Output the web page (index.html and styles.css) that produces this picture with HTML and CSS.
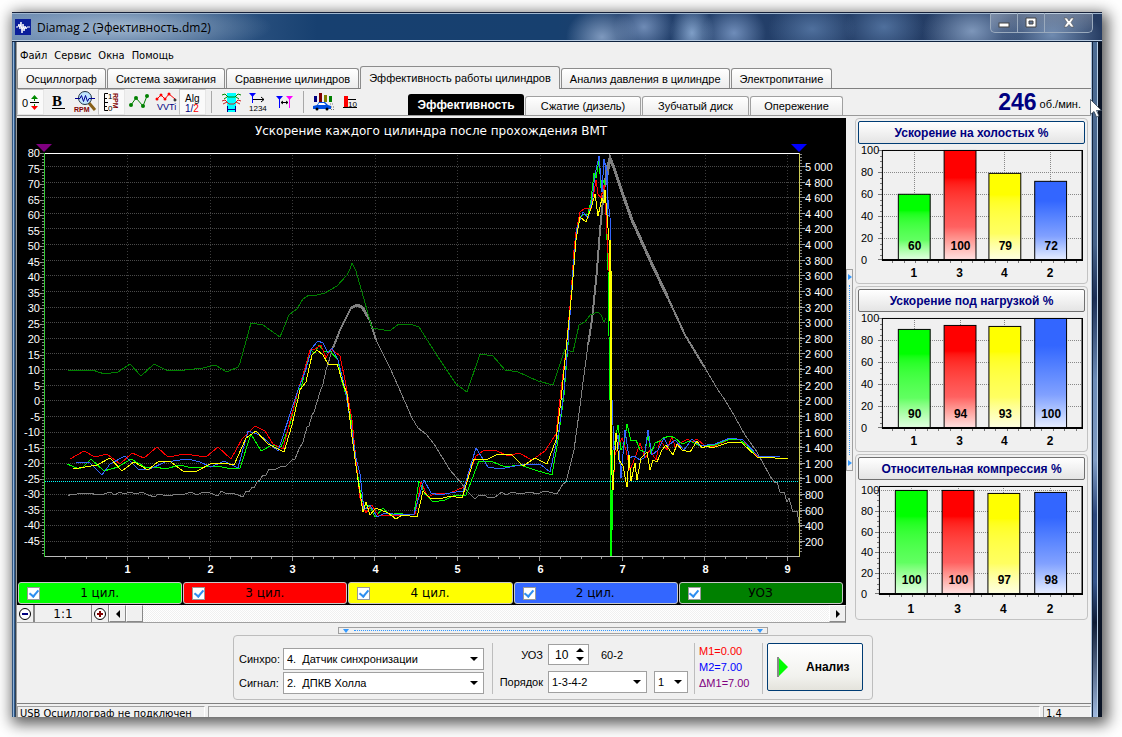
FILE: index.html
```html
<!DOCTYPE html>
<html lang="ru">
<head>
<meta charset="utf-8">
<title>Diamag 2 (Эфективность.dm2)</title>
<link rel="stylesheet" href="styles.css">
</head>
<body>
<div class="window">
  <header class="titlebar">
    <svg class="app-icon" width="16" height="16" viewBox="0 0 16 16"><rect width="16" height="16" fill="#0b1f9a"/><path d="M1 8h2l1-3 1 5 1-7 1 11 1-9 1 7 1-5 1 3 1-2h3" fill="none" stroke="#fff"/></svg>
    <span class="title">Diamag 2 (Эфективность.dm2)</span>
    <div class="controls">
      <button aria-label="Свернуть"><svg width="12" height="12"><rect x="1" y="6" width="10" height="4" fill="#fff" stroke="#444"/></svg></button>
      <button aria-label="Развернуть"><svg width="12" height="12"><path d="M1 1h10v9H1zM4 4v3h4V4z" fill="#fff" fill-rule="evenodd" stroke="#444"/></svg></button>
      <button class="close" aria-label="Закрыть"><svg width="12" height="12"><path d="M1 1h3l2 3 2-3h3L8 5.500l3 4.500H8L6 7.500 4 10H1l3-4.500z" fill="#fff" stroke="#555" stroke-width=".6"/></svg></button>
    </div>
  </header>
  <div class="frame">
    <div class="edge edge-left"></div>
    <main class="client">
      <nav class="menu"><a href="#">Файл</a><a href="#">Сервис</a><a href="#">Окна</a><a href="#">Помощь</a></nav>
      <nav class="tabs">
        <button>Осциллограф</button><button>Система зажигания</button><button>Сравнение цилиндров</button><button class="active">Эффективность работы цилиндров</button><button>Анализ давления в цилиндре</button><button>Электропитание</button>
      </nav>
      <div class="toolbar">
        <div class="tools">
          <button class="on" aria-label="Ноль"><svg viewBox="0 0 24 24"><text x="3" y="17" class="t11">0</text><path d="M11 12.500h9" stroke="#000"/><path d="M15.500 11V7M15.500 14v4" stroke="#080"/><path d="M12 9l3.500-4L19 9z" fill="#008a00"/><path d="M12 16l3.500 4 3.500-4z" fill="#f00"/></svg></button>
          <button aria-label="Жирный"><svg viewBox="0 0 24 24"><text x="6" y="16" class="serif">B</text><path d="M6 18.500h13" stroke="#000" stroke-width="1"/></svg></button>
          <button aria-label="Обороты"><svg viewBox="0 0 24 24"><path d="M16 13l6 7" stroke="#876018" stroke-width="3"/><circle cx="12" cy="8" r="6.500" fill="#bfe4ff" stroke="#234"/><path d="M2 8.500h5l1.500-3 2 6 2-6 2 6 1.500-3h6" fill="none" stroke="#000090"/><text x="1" y="22" class="rpm">RPM</text></svg></button>
          <button class="on" aria-label="Шкала оборотов"><svg viewBox="0 0 24 24"><path d="M8 3.500H4.500v17H8M5 8.500h2M5 12.500h3M5 16.500h2" fill="none" stroke="#000"/><text x="8" y="9" class="t8">1</text><text x="8" y="21" class="t8">0</text><text x="3" y="-13" transform="rotate(90)" class="rpm">RPM</text></svg></button>
          <button aria-label="Точки"><svg viewBox="0 0 24 24"><path d="M4 15l5-7 7 8 4-10" fill="none" stroke="#008000"/><g fill="#008000"><circle cx="4" cy="15" r="2"/><circle cx="9" cy="8" r="2"/><circle cx="16" cy="16" r="2"/><circle cx="20" cy="6" r="2"/></g></svg></button>
          <button aria-label="VVTi"><svg viewBox="0 0 24 24"><path d="M3 9l4-4 4 4 4-5 6 5" fill="none" stroke="#f00"/><g fill="#f00"><circle cx="3" cy="9" r="1.500"/><circle cx="7" cy="5" r="1.500"/><circle cx="11" cy="9" r="1.500"/><circle cx="15" cy="4" r="1.500"/></g><circle cx="21" cy="10" r="1" fill="none" stroke="#000"/><text x="3" y="20" class="vvt">VVTi</text></svg></button>
          <button class="on" aria-label="Алгоритм"><svg viewBox="0 0 24 24"><text x="4" y="12" class="t10">Alg</text><text x="4" y="22" class="t10" fill="#000080">1/<tspan fill="#f00">2</tspan></text></svg></button>
          <i class="sep"></i>
          <button aria-label="Интервал"><svg viewBox="0 0 24 24"><path d="M8 3h9v19H8z" fill="#0ff"/><path d="M3 5l3-1 3 3h7l3-3 3 1M5 9l3-2M20 9l-3-2" fill="none" stroke="#080"/><path d="M3 11l3-1 4 4h5l4-4 3 1M4 14l4-2M21 14l-4-2" fill="none" stroke="#c22"/><path d="M8.500 16v6M16.500 16v6M8 19.500h9" stroke="#000090"/></svg></button>
          <button aria-label="Порядок цилиндров"><svg viewBox="0 0 24 24"><path d="M3 3h7L6.500 7z" fill="#00f"/><path d="M6.500 6v7" stroke="#00f"/><path d="M7 9.500h11M15 7l3 2.500-3 2.500" fill="none" stroke="#000"/><text x="3" y="21" class="t8">1234</text></svg></button>
          <button aria-label="Маркеры"><svg viewBox="0 0 24 24"><path d="M3 6h7l-3.500 4z" fill="#00f"/><path d="M6.500 8v10" stroke="#00f"/><path d="M13 6h7l-3.500 4z" fill="#f0f"/><path d="M16.500 8v10" stroke="#f0f"/><path d="M8 12.500h7M10 11l-2 1.500 2 1.500M13 11l2 1.500-2 1.500" fill="none" stroke="#000"/></svg></button>
          <i class="sep"></i>
          <button aria-label="Автомобиль"><svg viewBox="0 0 24 24"><path d="M3 6h3v6H3z" fill="#000080"/><path d="M8 3h3v9H8z" fill="#800000"/><path d="M13 5h3v7h-3z" fill="#808000"/><path d="M18 6h3v6h-3z" fill="#008000"/><path d="M2 19v-3l4-1 2-3h6l3 3 3 1v3z" fill="#0050e0"/><path d="M8 13h5l2 2H7z" fill="#fff"/><circle cx="6" cy="19" r="1.500"/><circle cx="16" cy="19" r="1.500"/><path d="M19 14h4M20 17h3M20 19.500h3" stroke="#777" stroke-dasharray="1 1"/></svg></button>
          <button aria-label="Столбцы"><svg viewBox="0 0 24 24"><path d="M6 6h4v11H6z" fill="#f00"/><path d="M5 17.500h14M10 9.500h8" stroke="#000"/><text x="10" y="17" class="t8">10</text></svg></button>
        </div>
        <nav class="subtabs">
          <button class="active">Эффективность</button><button>Сжатие (дизель)</button><button>Зубчатый диск</button><button>Опережение</button>
        </nav>
        <p class="rpm-value"><b>246</b> об./мин.</p>
      </div>

      <div class="content">
        <section class="chart">
          <svg id="main" class="plot" viewBox="17 118 829 463" role="img" aria-label="Ускорение каждого цилиндра"></svg>
          <div class="legend">
            <label class="c1"><input type="checkbox" checked><span>1 цил.</span></label>
            <label class="c2"><input type="checkbox" checked><span>3 цил.</span></label>
            <label class="c3"><input type="checkbox" checked><span>4 цил.</span></label>
            <label class="c4"><input type="checkbox" checked><span>2 цил.</span></label>
            <label class="c5"><input type="checkbox" checked><span>УОЗ</span></label>
          </div>
          <div class="scroll">
            <button aria-label="Уменьшить"><svg width="14" height="14"><circle cx="7" cy="7" r="5.500" fill="#fff" stroke="#000"/><path d="M4 7h6" stroke="#000080" stroke-width="2"/></svg></button>
            <output>1:1</output>
            <button aria-label="Увеличить"><svg width="14" height="14"><circle cx="7" cy="7" r="5.500" fill="#fff" stroke="#000"/><path d="M4 7h6M7 4v6" stroke="#800000" stroke-width="2"/></svg></button>
            <button class="raised" aria-label="Влево"><svg width="8" height="8"><path d="M6 0v8L2 4z"/></svg></button>
            <button class="raised" aria-label="Ползунок"></button>
            <div class="track"></div>
            <button class="raised" aria-label="Вправо"><svg width="8" height="8"><path d="M2 0v8l4-4z"/></svg></button>
          </div>
        </section>
        <div class="vsplit"><i></i><b></b><i></i></div>
        <aside class="panels">
          <section><button class="focus">Ускорение на холостых %</button><svg id="idle" viewBox="0 0 228 137"></svg></section>
          <section><button>Ускорение под нагрузкой %</button><svg id="load" viewBox="0 0 228 137"></svg></section>
          <section><button>Относительная компрессия %</button><svg id="comp" viewBox="0 0 228 137"></svg></section>
        </aside>
      </div>

      <div class="hsplit"><i></i><b></b><i></i></div>
      <form class="settings">
        <div class="signals">
          <label for="sync">Синхро:</label><div class="combo"><select id="sync"><option>4.&nbsp; Датчик синхронизации</option></select></div>
          <label for="sig">Сигнал:</label><div class="combo"><select id="sig"><option>2.&nbsp; ДПКВ Холла</option></select></div>
        </div>
        <div class="order">
          <label for="uoz">УОЗ</label>
          <div class="line"><div class="spin"><input id="uoz" value="10"></div><span>60-2</span></div>
          <label for="ord">Порядок</label>
          <div class="line"><div class="combo wide"><select id="ord"><option>1-3-4-2</option></select></div><div class="combo narrow"><select aria-label="Первый цилиндр"><option>1</option></select></div></div>
        </div>
        <div class="markers"><span class="m1">M1=0.00</span><span class="m2">M2=7.00</span><span class="m3">ΔM1=7.00</span></div>
        <div class="run"><button type="button"><svg width="11" height="20"><path d="M1 0v20" stroke="#888" stroke-width="2"/><path d="M2 1v18l9-9z" fill="#0f0"/></svg>Анализ</button></div>
      </form>
      <footer class="status"><span class="usb">USB Осциллограф не подключен</span><span class="fill"></span><span class="ver">1.4</span></footer>
    </main>
    <div class="edge edge-right"></div>
  </div>
  <svg class="pointer" width="12" height="19" viewBox="0 0 12 19"><path d="M.5.5v15l3.500-3 2.500 5.500 2.500-1-2.500-5.500h5z" fill="#fff" stroke="#345" stroke-width=".8"/></svg>
</div>
<script src="charts.js"></script>
</body>
</html>
```
FILE: styles.css
```css
* { box-sizing: border-box; }
body { margin: 0; padding: 12px 20px 20px 12px; background: #fff; font: 12px "Liberation Sans", Arial, sans-serif; color: #000; }
button, input, select { font: inherit; color: inherit; margin: 0; border-radius: 0; }
button { padding: 0; border: 0; background: none; }
p { margin: 0; }
.window { position: relative; display: flex; flex-direction: column; height: calc(100vh - 32px); box-shadow: 3px 4px 14px 3px rgba(0,0,0,.65); background: #16305a; }

.titlebar { display: flex; align-items: center; height: 30px; padding-left: 3px; flex: none; border-top: 1px solid #16213a; border-bottom: 1px solid #10233f; box-shadow: inset 0 1px #9fb6cf, inset 0 -1px #b8cbe0;
  background:
    radial-gradient(ellipse 150px 28px at 110px 14px, rgba(190,208,226,.75), transparent),
    radial-gradient(ellipse 36px 30px at 590px 24px, rgba(150,175,210,.8), transparent),
    radial-gradient(ellipse 30px 26px at 632px 14px, rgba(130,158,200,.8), transparent),
    radial-gradient(ellipse 22px 30px at 680px 20px, rgba(150,182,222,.8), transparent),
    radial-gradient(ellipse 32px 28px at 722px 20px, rgba(130,160,205,.8), transparent),
    radial-gradient(ellipse 44px 28px at 800px 16px, rgba(90,124,170,.8), transparent),
    radial-gradient(ellipse 40px 28px at 872px 14px, rgba(90,124,170,.8), transparent),
    radial-gradient(ellipse 50px 34px at 960px 18px, rgba(135,160,195,.9), transparent),
    radial-gradient(ellipse 50px 28px at 1040px 22px, rgba(120,148,185,.9), transparent),
    linear-gradient(90deg, #6585ad, #2f5583 20%, #174070 28%, #17406f 50%, #22406c 56%, #263c62 100%); }
.app-icon { flex: none; margin-right: 6px; }
.title { font: 12px "Open Sans", "Noto Sans", sans-serif; flex: 1; }
.controls { display: flex; align-self: flex-start; margin-right: 9px; border: 1px solid #9aaabd; border-top: 0; border-radius: 0 0 5px 5px; }
.controls button { width: 27px; height: 19px; display: grid; place-items: center; background: linear-gradient(rgba(255,255,255,.3), rgba(255,255,255,.05)); border-right: 1px solid #9aaabd; }
.controls .close { width: 47px; border-right: 0; }

.frame { display: grid; grid-template-columns: 5px minmax(0,1fr) 11px; flex: 1; min-height: 0; }
.edge-left { background: linear-gradient(90deg, #33557e 0 1px, #8fb2d8 1px 2px, #2f5a8c 2px 3px, #33414f 3px 4px, #9a9a9a 4px); }
.edge-right { background: linear-gradient(90deg, #a9bfd8 0 1px, #12233c 1px 2px, transparent 2px 6px, #b9cfe6 6px 7px, #0a1426 7px), linear-gradient(#4c6c94, #45628a 30%, #1a2e55 38%, #6c8cb8 50%, #7f9cc4 62%, #2a467c 70%, #35558c 80%, #0d1b35 86%, #9fb9e0); }
.client { display: flex; flex-direction: column; background: #f0f0f0; overflow: hidden; min-width: 0; }
.client > * { flex: none; }

.menu { display: flex; gap: 7px; height: 24px; align-items: center; padding: 2px 3px 0; font: 11px "DejaVu Sans Condensed", "DejaVu Sans", sans-serif; }
.menu a { color: #000; text-decoration: none; }
.tabs { display: flex; gap: 1px; height: 23px; align-items: flex-end; border-bottom: 1px solid #808080; font-size: 11px; }
.tabs button, .subtabs button { height: 20px; padding: 0 8px; border: 1px solid #8c8c8c; border-radius: 3px 3px 0 0; border-bottom: 0; background: linear-gradient(#fff, #ececec); white-space: nowrap; }
.tabs .active { height: 23px; margin-bottom: -1px; background: #f0f0f0; }

.toolbar { display: flex; height: 27px; border-bottom: 1px solid #999; }
.tools { display: flex; width: 391px; align-items: stretch; }
.tools button { width: 27px; display: grid; place-items: center; }
.tools svg { width: 24px; height: 24px; }
.tools .on { background: #fafafa; border: 1px solid #c4c4c4; border-right-color: #e6e6e6; border-bottom-color: #e6e6e6; }
.sep { width: 1px; margin: 2px 5px; background: #a8a8a8; }
.t11 { font-size: 11px; } .t10 { font-size: 10px; } .t8 { font-size: 8px; }
.rpm { font-size: 7px; font-weight: 700; fill: #800000; }
.vvt { font-size: 9px; fill: #000080; }
.serif { font: bold 15px "Liberation Serif", serif; }
.subtabs { display: flex; gap: 1px; align-items: flex-end; font-size: 11px; }
.subtabs button { height: 19px; width: 116px; border-color: #a0a0a0; }
.subtabs button:nth-child(3) { width: 107px; }
.subtabs button:last-child { width: 93px; }
.subtabs .active { height: 21px; background: #000; color: #fff; font-weight: 700; border: 0; font-size: 12px; }
.rpm-value { margin-left: auto; padding-right: 10px; font-size: 11px; line-height: 27px; white-space: nowrap; }
.rpm-value b { font-size: 23px; color: #000080; vertical-align: -2px; }

.content { display: flex; align-items: flex-start; padding-top: 2px; }
.chart { flex: 1; min-width: 0; background: #000; border-bottom: 1px solid #a0a0a0; }
.plot { display: block; width: 100%; }
.plot text { fill: #fff; font-size: 11px; }
.plot .head { font: 12px "DejaVu Sans", sans-serif; }
.plot .ax { font-weight: 700; }
.trace { fill: none; shape-rendering: crispEdges; }
.legend { display: flex; gap: 1px; padding: 1px 3px 1px 1px; }
.legend label { flex: 1; display: flex; align-items: center; height: 22px; padding-left: 8px; border: 1px solid #c8c8c8; border-radius: 3px; font: 12px "DejaVu Sans", sans-serif; }
.legend span { flex: 1; text-align: center; padding-right: 22px; }
.legend input { appearance: none; width: 13px; height: 13px; border: 1px solid #999; background: #fff; display: grid; place-items: center; }
.legend input:checked::before { content: ""; width: 4px; height: 7px; margin-top: -2px; border: solid #2f8ff0; border-width: 0 2px 2px 0; transform: rotate(40deg); }
.c1 { background: #0f0; } .c2 { background: #f00; } .c3 { background: #ff0; } .c4 { background: #36f; } .c5 { background: #008000; }
.scroll { display: flex; height: 17px; background: #f0f0f0; }
.scroll button { width: 17px; display: grid; place-items: center; border-right: 1px solid #888; }
.scroll output { width: 58px; text-align: center; font: 12px/18px "DejaVu Sans", sans-serif; border-right: 1px solid #888; border-left: 1px solid #888; }
.scroll .raised { border: 1px solid #888; border-left-color: #fff; border-top-color: #fff; }
.track { flex: 1; background: repeating-conic-gradient(#fff 0 25%, #f0f0f0 0 50%) 0 0/2px 2px; }
.vsplit { width: 7px; height: 202px; margin-top: 151px; display: flex; flex-direction: column; align-items: center; justify-content: space-between; border: 1px solid #a0a0a0; padding: 4px 0; }
.vsplit b { flex: 1; margin: 5px 0; border-left: 1px dotted #39f; }
.vsplit i { border: solid transparent; border-width: 3px 0 3px 4px; border-left-color: #39f; }
.panels { width: 238px; padding: 0 3px 0 2px; display: grid; gap: 2px; }
.panels section { height: 166px; border: 1px solid #c2c2c2; border-radius: 4px; padding: 2px; }
.panels button { display: block; width: 100%; height: 23px; border: 1px solid #707070; border-radius: 2px; background: linear-gradient(#fff, #e4e4e4); color: #000080; font-weight: 700; }
.panels .focus { border-color: #003c74; }
.panels svg { display: block; width: 100%; }
.panels svg text { font-size: 11px; }
.panels svg .num { font-size: 12px; font-weight: 700; }

.hsplit { width: 430px; max-width: 100%; height: 7px; margin: 4px 0 0 321px; display: flex; align-items: center; justify-content: space-between; border: 1px solid #a0a0a0; padding: 0 4px; }
.hsplit b { flex: 1; margin: 0 5px; border-top: 1px dotted #39f; }
.hsplit i { border: solid transparent; border-width: 4px 3px 0; border-top-color: #39f; }
.settings { display: flex; width: 640px; height: 65px; margin: 1px 0 3px 216px; padding: 7px 9px 5px 5px; border: 1px solid #bdbdbd; border-radius: 4px; font-size: 11px; }
.signals { display: grid; grid-template-columns: 44px 201px; row-gap: 2px; align-items: center; padding: 5px 8px 0 0; border-right: 1px solid #bdbdbd; }
.combo { position: relative; height: 22px; }
.combo select { appearance: none; width: 100%; height: 100%; padding: 0 3px; border: 1px solid #a0a0a0; background: #fff; }
.combo::after { content: ""; position: absolute; right: 6px; top: 9px; border: solid transparent; border-width: 4px 4px 0; border-top-color: #000; }
.order { display: grid; grid-template-columns: 55px auto; row-gap: 3px; align-items: center; padding: 0 6px 0 0; border-right: 1px solid #bdbdbd; }
.order label { text-align: right; padding-right: 5px; }
.line { display: flex; align-items: center; gap: 7px; }
.line > span { padding-left: 5px; }
.wide { width: 99px; } .narrow { width: 34px; }
.spin { position: relative; width: 41px; height: 21px; }
.spin input { width: 100%; height: 100%; border: 1px solid #a0a0a0; padding: 0 6px; background: #fff; font-size: 12px; }
.spin::before, .spin::after { content: ""; position: absolute; right: 5px; border: solid transparent; }
.spin::before { top: 4px; border-width: 0 4px 4px; border-bottom-color: #000; }
.spin::after { bottom: 4px; border-width: 4px 4px 0; border-top-color: #000; }
.markers { display: flex; flex-direction: column; width: 69px; padding-left: 4px; line-height: 16px; border-right: 1px solid #bdbdbd; white-space: nowrap; }
.m1 { color: #f00; } .m2 { color: #00f; } .m3 { color: #800080; }
.run { padding-left: 4px; }
.run button { display: flex; align-items: center; gap: 18px; width: 96px; height: 48px; padding-left: 9px; border: 1px solid #003c74; border-radius: 2px; background: linear-gradient(#fff, #f2f2ee 70%, #e4e3dc); font-weight: 700; font-size: 12px; }
.status { display: flex; gap: 3px; border-top: 1px solid #808080; padding-top: 2px; font: 11px/14px "DejaVu Sans Condensed", "DejaVu Sans", sans-serif; }
.status span { border: 1px solid #a0a0a0; border-right-color: #fff; height: 18px; padding-left: 2px; white-space: nowrap; }
.usb { width: 188px; } .fill { flex: 1; } .ver { width: 48px; }
.pointer { position: absolute; right: 0; top: 87px; }
```
FILE: charts.js
```js
const NS = 'http://www.w3.org/2000/svg';
function add(root, tag, attrs, text) {
  const el = document.createElementNS(NS, tag);
  for (const k in attrs) el.setAttribute(k, attrs[k]);
  if (text !== undefined) el.textContent = text;
  root.appendChild(el);
  return el;
}
function line(root, x1, y1, x2, y2, stroke, dash) {
  const a = { x1, y1, x2, y2, stroke, 'shape-rendering': 'crispEdges' };
  if (dash) a['stroke-dasharray'] = dash;
  add(root, 'line', a);
}

const main = document.getElementById('main');
add(main, 'text', { x: 431, y: 135, 'text-anchor': 'middle', class: 'head' }, 'Ускорение каждого цилиндра после прохождения ВМТ');
for (let i = 0; i < 25; i++) {
  const y = Math.round(541 - i * 15.63) + 0.5;
  line(main, 46, y, 799, y, '#4a4a4a', '1 1');
  line(main, 800, y, 805, y, '#aaa');
  const v = (i + 1) * 200;
  const label = v < 1000 ? String(v) : Math.floor(v / 1000) + ' ' + String(v % 1000).padStart(3, '0');
  add(main, 'text', { x: 805, y: y + 4 }, label);
}
for (let i = 0; i < 26; i++) {
  const y = Math.round(153 + i * 15.52);
  line(main, 40, y + 0.5, 44, y + 0.5, '#999');
  add(main, 'text', { x: 40, y: y + 4, 'text-anchor': 'end' }, String(80 - i * 5));
}
for (let i = 0; i < 130; i++) {
  const y = Math.round(153 + i * 3.104) + 0.5;
  line(main, 42, y, 44, y, '#888');
  if (i < 129) line(main, 800, y + 1, 802, y + 1, '#888');
}
for (let i = 1; i < 10; i++) {
  const x = Math.round(44.5 + i * 82.5) + 0.5;
  line(main, x, 155, x, 556, '#3c3c3c', '1 2');
  add(main, 'text', { x, y: 573, 'text-anchor': 'middle', class: 'ax' }, String(i));
}
for (let i = 1; i < 37; i++) {
  const x = Math.round(44.5 + i * 20.62) + 0.5;
  line(main, x, 557, x, i % 4 ? 559 : 561, '#999');
}
line(main, 45, 481.5, 799, 481.5, '#0ff', '1 1');

const gray = '68,496 71,494 75,495 79,493 86,494 91,493 96,495 104,494 110,492 115,495 120,492 124,494 130,492 136,494 142,492 148,495 155,497 158,494 168,496 178,494 182,495 191,492 197,495 203,492 210,493 218,496 221,491 227,494 232,493 238,495 243,497 246,491 249,492 252,487 254,488 257,482 260,480 263,475 266,475 269,469 274,470 280,467 286,466 292,460 295,459 299,449 303,442 307,427 309,426 312,415 314,412 320,392 323,384 326,370 333,348 340,330 346,318 351,308 357,305 362,307 370,321 376,340 390,368 398,386 405,402 412,418 418,428 426,434 434,444 450,470 462,484 467,491 475,499 479,495 485,495 488,498 495,497 502,492 506,495 512,492 520,494 530,492 537,494 545,491 557,494 563,484 566,482 569,470 574,450 580,406 582,390 588,345 592,320 597,270 600,230 603,200 607,165 610,155 614,168 622,192 632,220 650,260 668,298 685,335 705,368 718,390 725,400 735,417 745,435 757,452 770,476 775,483 777,482 780,492 784,492 787,502 789,498 793,512 797,511 799,523';
const traces = [
  ['#808080', 1, gray],
  ['#808080', 2, '333,348 340,330 346,318 351,308 357,305 362,307 370,321 376,340'],
  ['#808080', 3, '351,308 357,305 362,307 368,317'],
  ['#808080', 3, '607,175 610,158 614,168 622,192 632,220 650,260 668,298'],
  ['#808080', 2, '588,345 592,320 597,270 600,230 603,200 607,165'],
  ['#808080', 2, '668,298 685,335 705,368'],
  ['#008000', 1, '68,370 93,370 98,372 105,374 118,372 130,364 141,376 154,364 166,370 185,370 203,368 215,365 227,372 238,367 240,363 251,323 263,325 280,337 289,315 297,309 303,299 309,295 317,295 325,293 337,286 347,275 350,269 352,263 356,271 367,310 372,328 384,330 391,330 399,324 410,324 419,327 438,357 456,384 467,392 480,354 493,356 505,370 518,372 538,381 553,385 565,349 573,352 579,325 585,322 590,315 598,312 601,315 604,322 606,318'],
  ['#00ff00', 1, '67,464 79,469 83,467 91,459 104,471 118,467 131,459 145,467 155,467 166,469 179,465 193,468 205,467 218,466 231,469 240,468 251,434 261,451 272,445 281,447 290,424 298,390 301,388 310,350 315,353 319,345 324,351 330,351 338,360 341,378 346,395 350,410 354,450 360,490 364,506 369,505 375,517 383,508 390,515 399,513 407,515 414,514 419,481 425,494 433,502 445,500 455,495 466,495 479,461 493,462 505,467 520,465 535,470 552,475 558,440 564,395 568,345 572,285 575,245 579,218 584,214 588,214 591,200 594,173 596,178 599,160 601,188 604,180 606,210 608,270 610,400 611,556'],
  ['#ff0000', 1, '70,459 84,451 95,457 107,454 120,464 132,453 144,458 157,447 168,457 185,454 206,457 218,447 231,459 242,439 255,426 265,431 273,444 283,449 298,390 303,375 310,350 315,349 321,345 326,358 331,349 340,356 345,380 352,420 357,470 360,498 366,513 372,505 378,515 395,516 415,514 421,482 428,497 436,493 450,493 464,487 476,456 483,451 495,450 508,456 519,453 532,460 545,451 556,434 561,390 566,350 571,295 574,250 576,232 580,212 585,208 591,209 596,180 598,194 601,198 604,185 606,215 610,290 611,420 613,490 615,455 618,447 622,438 626,450 630,470 635,458 640,443 645,458 650,450 656,460 660,440 667,450 672,436 675,447 680,443 688,439 692,442 697,439 705,446 715,446 730,439 742,439 757,456 777,457'],
  ['#00ff00', 1, '612,530 612,480 613,450 616,436 618,425 621,450 624,445 627,424 631,441 636,440 640,450 645,452 648,434 651,454 655,443 660,441 663,438 670,436 675,438 682,444 690,441 700,446 715,445 730,439 740,440 747,446 757,457 770,458'],
  ['#3366ff', 1, '76,462 90,463 102,475 110,464 125,456 138,469 150,469 165,462 188,459 200,462 211,467 224,461 238,468 248,431 260,435 278,451 298,390 305,372 312,348 318,341 323,343 328,353 332,348 338,360 345,388 351,425 356,458 360,474 364,510 370,505 377,517 385,513 400,515 414,514 424,480 431,493 440,495 450,493 463,491 476,448 488,467 500,469 520,465 540,464 550,472 559,430 564,390 569,330 573,270 577,228 583,212 588,218 592,200 595,175 599,156 602,192 604,159 607,170 608,215 610,217 611,278 612,400 614,450 618,435 621,478 625,430 629,458 634,456 640,460 644,458 648,430 652,455 658,450 664,438 668,446 675,440 684,450 692,439 700,446 715,444 730,438 743,440 758,456 780,457'],
  ['#ffff00', 1, '73,469 85,467 97,465 110,458 122,471 134,462 148,470 159,461 171,462 184,472 197,471 210,464 224,463 234,465 246,438 256,431 268,444 284,452 292,425 300,390 306,382 312,355 317,350 323,355 328,364 337,364 343,383 347,394 352,437 358,480 363,512 366,502 370,515 376,508 388,513 396,519 402,515 417,517 423,491 430,498 440,499 450,496 462,498 474,459 486,460 498,454 512,455 523,466 535,458 547,464 556,440 561,400 566,350 572,290 576,240 580,217 586,222 592,205 595,194 598,216 602,198 604,203 605,190 609,240 611,400 612,475 613,490 615,450 616,433 619,460 623,466 627,487 629,455 631,481 635,463 637,480 641,458 647,452 650,470 653,460 657,462 662,450 666,445 673,455 677,444 682,450 690,452 697,441 702,448 707,446 712,448 730,442 742,443 757,457 775,458 788,459'],
  ['#3366ff', 1, '604,159 606,170 608,200 610,217 611,278'],
  ['#ffff00', 2, '610,240 611,300 611,455'],
  ['#00ff00', 2, '611,490 611,556']
];
for (const [stroke, width, points] of traces) {
  add(main, 'polyline', { points, stroke, 'stroke-width': width, class: 'trace' });
}
line(main, 44, 153.5, 800, 153.5, '#fff');
line(main, 44, 556.5, 800, 556.5, '#bbb');
line(main, 44.5, 153, 44.5, 557, '#3c3');
line(main, 799.5, 153, 799.5, 557, '#cc5');
add(main, 'path', { d: 'M36 144h16l-8 8z', fill: '#800080' });
add(main, 'path', { d: 'M791 144h16l-8 8z', fill: '#00f' });

const colors = ['#00ff00', '#ff0000', '#ffff00', '#3366ff'];
function bars(id, left, top, bottom, step, xs, values, labelY) {
  const svg = document.getElementById(id);
  const defs = add(svg, 'defs', {});
  for (let i = 0; i <= 5; i++) {
    const y = Math.round(bottom - i * step) + 0.5;
    if (i) line(svg, left, y, 224, y, '#888', '1 1');
    line(svg, left - 4, y, left, y, '#777');
    add(svg, 'text', { x: 3, y: y + 4 }, String(i * 20));
  }
  for (let i = 1; i < 20; i++) {
    const y = Math.round(bottom - i * step / 4) + 0.5;
    line(svg, left - 2, y, left, y, '#777');
  }
  for (const x of xs) line(svg, x + 16.5, top, x + 16.5, bottom, '#888', '1 1');
  for (let i = 0; i < 17; i++) line(svg, left + 10.5 + i * 11.5, bottom + 1, left + 10.5 + i * 11.5, bottom + 4, '#777');
  add(svg, 'rect', { x: left, y: top, width: 225 - left, height: bottom - top + 1, fill: 'none', stroke: '#000', 'stroke-width': 1 });
  add(svg, 'path', { d: `M${left} ${bottom + 1}H225.5V${top}`, fill: 'none', stroke: '#000', 'stroke-width': 2, 'shape-rendering': 'crispEdges' });
  xs.forEach((x, i) => {
    const g = add(defs, 'linearGradient', { id: id + i, x1: 0, y1: 0, x2: 0, y2: 1 });
    add(g, 'stop', { offset: 0, 'stop-color': colors[i] });
    add(g, 'stop', { offset: 0.25, 'stop-color': colors[i] });
    add(g, 'stop', { offset: 0.7, 'stop-color': `color-mix(in srgb, ${colors[i]} 62%, white)` });
    add(g, 'stop', { offset: 1, 'stop-color': `color-mix(in srgb, ${colors[i]} 12%, white)` });
    const y = Math.round(bottom - values[i] * step / 20) + 0.5;
    add(svg, 'rect', { x: x + 0.5, y, width: 32, height: bottom - y, fill: `url(#${id + i})`, stroke: '#000' });
    add(svg, 'text', { x: x + 17, y: bottom - 10, 'text-anchor': 'middle', class: 'num' }, String(values[i]));
    add(svg, 'text', { x: x + 16, y: labelY, 'text-anchor': 'middle', class: 'num' }, ['1', '3', '4', '2'][i]);
  });
}
bars('idle', 24.5, 6.5, 116, 22, [40, 86, 131, 177], [60, 100, 79, 72], 134);
bars('load', 24.5, 6.5, 116, 22, [40, 86, 131, 177], [90, 94, 93, 100], 134);
bars('comp', 21.5, 6.5, 114, 20.8, [37, 84, 130, 177], [100, 100, 97, 98], 134);
```
